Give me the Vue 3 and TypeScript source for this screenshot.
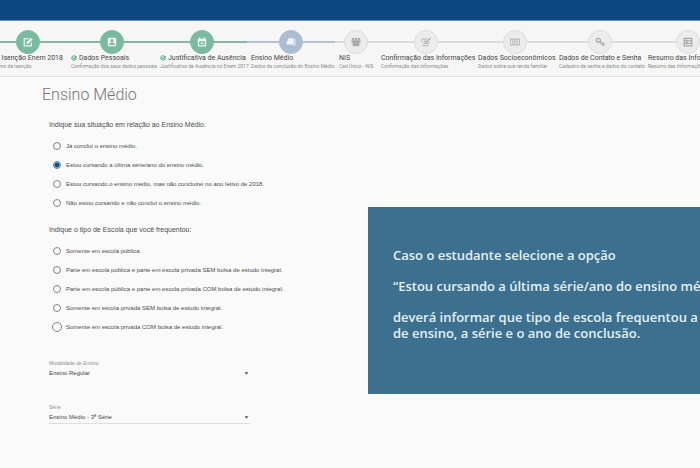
<script setup lang="ts">
import { ref } from 'vue'

type StepState = 'done' | 'current' | 'pending'
interface Step {
  title: string
  subtitle: string
  state: StepState
  icon: string
  check?: boolean
}

const steps: Step[] = [
  { title: '- Isenção Enem 2018', subtitle: 'Termo de isenção', state: 'done', icon: 'edit' },
  { title: 'Dados Pessoais', subtitle: 'Confirmação dos seus dados pessoais', state: 'done', icon: 'person', check: true },
  { title: 'Justificativa de Ausência', subtitle: 'Justificativa de Ausência no Enem 2017', state: 'done', icon: 'calendar', check: true },
  { title: 'Ensino Médio', subtitle: 'Dados da conclusão do Ensino Médio', state: 'current', icon: 'book' },
  { title: 'NIS', subtitle: 'Cad Único - NIS', state: 'pending', icon: 'group' },
  { title: 'Confirmação das Informações', subtitle: 'Confirmação das Informações', state: 'pending', icon: 'confirm' },
  { title: 'Dados Socioeconômicos', subtitle: 'Dados sobre sua renda familiar', state: 'pending', icon: 'money' },
  { title: 'Dados de Contato e Senha', subtitle: 'Cadastro de senha e dados do contato', state: 'pending', icon: 'key' },
  { title: 'Resumo das Informações', subtitle: 'Resumo das Informações', state: 'pending', icon: 'list' },
]

const situations: string[] = [
  'Já concluí o ensino médio.',
  'Estou cursando a última série/ano do ensino médio.',
  'Estou cursando o ensino médio, mas não concluirei no ano letivo de 2018.',
  'Não estou cursando e não concluí o ensino médio.',
]
const schools: string[] = [
  'Somente em escola pública.',
  'Parte em escola pública e parte em escola privada SEM bolsa de estudo integral.',
  'Parte em escola pública e parte em escola privada COM bolsa de estudo integral.',
  'Somente em escola privada SEM bolsa de estudo integral.',
  'Somente em escola privada COM bolsa de estudo integral.',
]

const situation = ref(1)
const school = ref<number | null>(null)
const modality = ref('Ensino Regular')
const grade = ref('Ensino Médio - 3ª Série')
</script>

<template>
  <div class="page">
    <div class="topbar"></div>
    <nav class="stepper" aria-label="Etapas">
      <ol class="steps">
        <li v-for="step in steps" :key="step.title" class="step" :class="step.state">
          <div class="track">
            <span class="circle">
              <svg viewBox="0 0 24 24" class="icon" aria-hidden="true">
                <g v-if="step.icon === 'edit'" fill="none" stroke="currentColor" stroke-width="3">
                  <path d="M13 4H3v17h17v-8" />
                  <path d="M8 16l1-4L19 2l4 4-10 10z" fill="currentColor" stroke="none" />
                </g>
                <path v-else-if="step.icon === 'person'" fill="currentColor" fill-rule="evenodd" d="M4 2h16a2 2 0 0 1 2 2v16a2 2 0 0 1-2 2H4a2 2 0 0 1-2-2V4a2 2 0 0 1 2-2zm8 3a4 4 0 1 0 0 8 4 4 0 0 0 0-8zM5 19h14v-1c0-3-4-4-7-4s-7 1-7 4z" />
                <path v-else-if="step.icon === 'calendar'" fill="currentColor" fill-rule="evenodd" d="M5 1h3v3h8V1h3v3h3v19H2V4h3zm0 9v10h14V10zm4 3h6v4H9z" />
                <path v-else-if="step.icon === 'book'" fill="currentColor" d="M6 3h13v14H0zM21 6h2v13h-3v4l-4-4H2v-1h19z" />
                <g v-else-if="step.icon === 'group'" fill="currentColor">
                  <circle cx="5" cy="5" r="3" />
                  <circle cx="12" cy="5" r="3" />
                  <circle cx="19" cy="5" r="3" />
                  <path d="M1 8h22v6h-3v8H4v-8H1z" />
                </g>
                <g v-else-if="step.icon === 'confirm'" fill="none" stroke="currentColor" stroke-width="2">
                  <path d="M16 5H2v6l5 5h12v-4M3 21h15" />
                  <path d="M8 9l4 4L23 3" stroke-width="3" />
                </g>
                <g v-else-if="step.icon === 'money'" fill="none" stroke="currentColor" stroke-width="2">
                  <path d="M1 5h22v14H1zM7 5v14M17 5v14" />
                  <path d="M12 8v8M10 10h3" />
                </g>
                <g v-else-if="step.icon === 'key'" fill="none" stroke="currentColor" stroke-width="3">
                  <circle cx="8" cy="8" r="5" />
                  <path d="M12 12l9 9M16 16l4-4M19 20l4-4" />
                </g>
                <g v-else fill="none" stroke="currentColor" stroke-width="3">
                  <path d="M3 3h18v18H3zM3 9h18M3 15h18M9 6v12" />
                </g>
              </svg>
            </span>
          </div>
          <div class="step-title">
            <svg v-if="step.check" viewBox="0 0 12 12" class="check" aria-hidden="true">
              <circle cx="6" cy="6" r="4.5" /><path d="M4 5l2 3 5-6" />
            </svg>
            <span>{{ step.title }}</span>
          </div>
          <div class="step-sub">{{ step.subtitle }}</div>
        </li>
      </ol>
    </nav>

    <main class="content">
      <form class="form" @submit.prevent>
        <h1>Ensino Médio</h1>
        <fieldset>
          <legend>Indique sua situação em relação ao Ensino Médio.</legend>
          <label v-for="(text, i) in situations" :key="text" class="option">
            <input v-model="situation" type="radio" name="situation" :value="i" />
            <span>{{ text }}</span>
          </label>
        </fieldset>
        <fieldset>
          <legend>Indique o tipo de Escola que você frequentou:</legend>
          <label v-for="(text, i) in schools" :key="text" class="option" :class="{ enlarged: i === 4 }">
            <input v-model="school" type="radio" name="school" :value="i" />
            <span>{{ text }}</span>
          </label>
        </fieldset>
        <div class="field">
          <label for="modality">Modalidade de Ensino</label>
          <div class="select">
            <select id="modality" v-model="modality"><option>Ensino Regular</option></select>
            <svg viewBox="0 0 8 8" aria-hidden="true"><path d="M1 2h6L4 6z" /></svg>
          </div>
        </div>
        <div class="field underlined">
          <label for="grade">Série</label>
          <div class="select">
            <select id="grade" v-model="grade"><option>Ensino Médio - 3ª Série</option></select>
            <svg viewBox="0 0 8 8" aria-hidden="true"><path d="M1 2h6L4 6z" /></svg>
          </div>
        </div>
      </form>

      <aside class="note">
        <p>Caso o estudante selecione a opção</p>
        <p>“Estou cursando a última série/ano do ensino médio”</p>
        <p>deverá informar que tipo de escola frequentou a<br />de ensino, a série e o ano de conclusão.</p>
      </aside>
    </main>
  </div>
</template>

<style>
body {
  margin: 0;
  background: #fafafa;
}
</style>

<style scoped>
.page {
  min-height: 100vh;
  overflow: hidden;
  background: #fafafa;
  color: #4c4c4c;
  font-family: "Liberation Sans", Arial, sans-serif;
}
.topbar {
  height: 20px;
  background: #0c4783;
  border-bottom: 1px solid #6f8fb8;
}
.stepper {
  overflow: hidden;
  background: #f6f6f6;
  border-bottom: 1px solid #dedede;
}
.steps {
  display: grid;
  grid-template-columns: 71px 81px 83px 80px 34px 89px 73px 81px 80px;
  gap: 8px;
  margin: 0 0 0 -8px;
  padding: 9px 0 6px;
  list-style: none;
}
.step {
  --tone: #dcdcdc;
  min-width: 0;
  white-space: nowrap;
}
.step.done {
  --tone: #8ab5a3;
}
.step.current {
  --tone: #b4c2d3;
}
.track {
  display: flex;
  align-items: center;
  margin: 0 -4px;
}
.track::before,
.track::after {
  content: "";
  flex: 1;
  height: 2px;
  background: var(--tone);
}
.circle {
  display: grid;
  place-items: center;
  box-sizing: border-box;
  width: 24px;
  height: 24px;
  border: 1px solid #dcdcdc;
  border-radius: 50%;
  background: #ececec;
  color: #a9a9a9;
}
.done .circle {
  border-color: #7abb9f;
  background: #7abb9f;
  color: #f1faf6;
}
.current .circle {
  border-color: #adbdd0;
  background: #adbdd0;
  color: #eef3f8;
}
.icon {
  width: 10px;
  height: 10px;
}
.step-title {
  display: flex;
  align-items: center;
  gap: 2px;
  height: 8px;
  color: #444;
  font: 7px/8px Roboto, sans-serif;
}
.step:first-child .step-title {
  justify-content: flex-end;
}
.check {
  flex: none;
  width: 6px;
  height: 6px;
  fill: none;
  stroke: #4aa583;
  stroke-width: 2;
}
.step-sub {
  color: #8c8c8c;
  font: 5px/8px Roboto, sans-serif;
}
.content {
  display: grid;
  grid-template-columns: 368px 1fr;
  align-items: start;
}
.form {
  padding: 8px 0 0 49px;
}
h1 {
  margin: 0 0 2px -7px;
  color: #757575;
  font: 300 16px/20px Roboto, sans-serif;
}
fieldset {
  margin: 0;
  padding: 0;
  border: 0;
}
legend {
  padding: 14px 0 7px;
  font-size: 7px;
  line-height: 8px;
}
.option {
  display: flex;
  align-items: center;
  gap: 5px;
  height: 19px;
  padding-left: 4px;
  font-size: 6px;
  white-space: nowrap;
}
.option input {
  appearance: none;
  box-sizing: border-box;
  width: 8px;
  height: 8px;
  margin: 0;
  border: 1px solid #858585;
  border-radius: 50%;
}
.option.enlarged {
  gap: 4px;
  padding-left: 3px;
}
.option.enlarged input {
  width: 10px;
  height: 10px;
}
.option input:checked {
  border-color: #4d7fac;
  background: radial-gradient(circle, #174d83 0 2px, #d3e1ed 3px);
}
.field {
  width: 201px;
  margin-top: 23px;
}
.field > label {
  display: block;
  color: #909090;
  font-size: 5px;
  line-height: 8px;
}
.select {
  display: flex;
  align-items: center;
  padding-right: 1px;
  border-bottom: 1px solid transparent;
}
.underlined .select {
  border-color: #dedede;
}
select {
  flex: 1;
  appearance: none;
  height: 12px;
  padding: 0;
  border: 0;
  background: none;
  color: #444;
  font: 6px/12px "Liberation Sans", Arial, sans-serif;
}
.select svg {
  width: 5px;
  height: 5px;
  fill: #555;
}
.note {
  overflow: hidden;
  margin-top: 130px;
  padding: 40px 0 53px 25px;
  background: #3c708e;
  color: #e3f1f8;
  font: 600 13px/16px "Open Sans", sans-serif;
  white-space: nowrap;
}
.note p {
  margin: 0 0 15px;
}
.note p:last-child {
  margin: 0;
}
</style>
